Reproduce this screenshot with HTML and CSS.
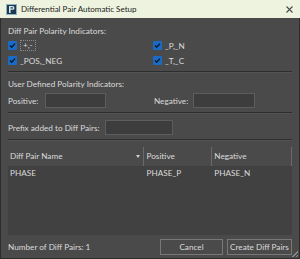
FILE: index.html
```html
<!DOCTYPE html>
<html lang="en">
<head>
  <meta charset="UTF-8" />
  <title>Differential Pair Automatic Setup</title>
  <link rel="stylesheet" href="styles.css">
</head>
<body>
  <div class="dialog">
    <div class="titlebar">
      <svg class="app-icon" width="11" height="11" viewBox="0 0 11 11">
        <rect x="0.5" y="0.5" width="10" height="10" fill="#1d3b50" stroke="#8fb2c4"/>
        <path d="M3 2h3.6a1.9 1.9 0 0 1 0 3.8H4.6V9H3z M4.6 3.3v1.3h1.9a0.65 0.65 0 0 0 0-1.3z" fill="#d6e6ee" fill-rule="evenodd"/>
      </svg>
      <span class="title">Differential Pair Automatic Setup</span>
      <svg class="close" width="7" height="7" viewBox="0 0 7 7">
        <path d="M0.5 0.5L6.5 6.5M6.5 0.5L0.5 6.5" stroke="#4a4a4a" stroke-width="1.1"/>
      </svg>
    </div>

    <div class="content">
      <div class="label">Diff Pair Polarity Indicators:</div>
      <div class="checks">
        <label class="check">
          <svg class="box" width="9" height="9" viewBox="0 0 9 9"><rect width="9" height="9" rx="1" fill="#1a6bc6"/><path d="M2 4.6L3.7 6.3L7 2.6" fill="none" stroke="#0c1724" stroke-width="1.4"/></svg>
          <span class="focus">+,-</span>
        </label>
        <label class="check">
          <svg class="box" width="9" height="9" viewBox="0 0 9 9"><rect width="9" height="9" rx="1" fill="#1a6bc6"/><path d="M2 4.6L3.7 6.3L7 2.6" fill="none" stroke="#0c1724" stroke-width="1.4"/></svg>
          <span>_P,_N</span>
        </label>
        <label class="check">
          <svg class="box" width="9" height="9" viewBox="0 0 9 9"><rect width="9" height="9" rx="1" fill="#1a6bc6"/><path d="M2 4.6L3.7 6.3L7 2.6" fill="none" stroke="#0c1724" stroke-width="1.4"/></svg>
          <span>_POS,_NEG</span>
        </label>
        <label class="check">
          <svg class="box" width="9" height="9" viewBox="0 0 9 9"><rect width="9" height="9" rx="1" fill="#1a6bc6"/><path d="M2 4.6L3.7 6.3L7 2.6" fill="none" stroke="#0c1724" stroke-width="1.4"/></svg>
          <span>_T,_C</span>
        </label>
      </div>
      <div class="sep"></div>

      <div class="label">User Defined Polarity Indicators:</div>
      <div class="row pol-row">
        <span class="lbl-pos">Positive:</span><span class="field f-pos"></span>
        <span class="lbl-neg">Negative:</span><span class="field f-neg"></span>
      </div>
      <div class="sep"></div>

      <div class="row prefix-row">
        <span class="lbl-prefix">Prefix added to Diff Pairs:</span><span class="field f-prefix"></span>
      </div>
      <div class="sep"></div>

      <div class="table">
        <div class="thead">
          <div class="th c1">Diff Pair Name<span class="sort"></span></div>
          <div class="th c2">Positive</div>
          <div class="th c3">Negative</div>
        </div>
        <div class="tbody">
          <div class="tr">
            <div class="td c1">PHASE</div>
            <div class="td c2">PHASE_P</div>
            <div class="td c3">PHASE_N</div>
          </div>
        </div>
      </div>

      <div class="footer">
        <span class="count">Number of Diff Pairs: 1</span>
        <button class="btn cancel">Cancel</button>
        <button class="btn create">Create Diff Pairs</button>
      </div>
    </div>
    <div class="grip"></div>
  </div>
</body>
</html>
```

FILE: styles.css
```css
* {
  box-sizing: border-box;
}
body {
  margin: 0;
  background: #2b2b2b;
  font-family: 'Lato', 'Liberation Sans', sans-serif;
  font-size: 8.2px;
  color: #dadada;
}
.dialog {
  position: relative;
  width: 300px;
  height: 259px;
  border: 1px solid #2c2c2c;
  border-top: none;
  background: #4a4a4a;
  display: flex;
  flex-direction: column;
}
.titlebar {
  height: 21px;
  margin: 0 -1px;
  background: #edf3de;
  display: flex;
  align-items: center;
  padding-left: 6px;
  color: #1b1b1b;
  font-size: 8px;
}
.app-icon {
  margin-right: 4px;
}
.title {
  flex: 1;
}
.close {
  margin-right: 7px;
}
.content {
  flex: 1;
  padding: 6px 7px 0 7px;
  display: flex;
  flex-direction: column;
}
.label {
  height: 14px;
  line-height: 14px;
}
.checks {
  display: grid;
  grid-template-columns: 145px 1fr;
}
.check {
  display: flex;
  align-items: center;
  height: 15px;
  gap: 3px;
}
.focus {
  border: 1px dotted #8c8c8c;
  padding: 0 2px;
  line-height: 9px;
}
.sep {
  height: 2px;
  background: #2d2d2d;
  border-bottom: 1px solid #535353;
  margin: 3px 0 4px 0;
}
.row {
  display: flex;
  align-items: center;
  height: 17px;
}
.pol-row {
  margin-top: 1px;
}
.prefix-row {
  margin-top: 1px;
}
.field {
  background: #3d3d3d;
  border: 1px solid #5d5d5d;
}
.lbl-pos { width: 37px; }
.f-pos { width: 61px; height: 15px; }
.lbl-neg { width: 39px; margin-left: 48px; }
.f-neg { width: 62px; height: 15px; }
.lbl-prefix { width: 97px; }
.f-prefix { width: 68px; height: 15px; }
.table {
  height: 88px;
  display: flex;
  flex-direction: column;
  margin-top: 2px;
}
.thead {
  display: flex;
  height: 19px;
  line-height: 19px;
}
.th {
  border-right: 1px solid #6a6a6a;
}
.thead .c1 {
  position: relative;
  padding-left: 2px;
}
.sort {
  position: absolute;
  right: 3px;
  top: 8px;
  border-left: 2.5px solid transparent;
  border-right: 2.5px solid transparent;
  border-top: 3px solid #d0d0d0;
}
.c1 { width: 136px; }
.c2 { width: 69px; padding-left: 3px; }
.c3 { width: 80px; padding-left: 2px; }
.tbody {
  flex: 1;
  background: #414141;
}
.tr {
  display: flex;
  height: 14px;
  line-height: 14px;
}
.tbody .c1 {
  padding-left: 2px;
}
.footer {
  display: flex;
  align-items: center;
  height: 23px;
}
.count {
  flex: 1;
}
.btn {
  height: 16px;
  background: #4a4a4a;
  border: 1px solid #787878;
  color: #dadada;
  font-family: inherit;
  font-size: 8.2px;
  padding: 0;
}
.cancel { width: 63px; margin-right: 4px; }
.create { width: 65px; }
.grip {
  position: absolute;
  right: 1px;
  bottom: 1px;
  width: 6px;
  height: 6px;
  background: linear-gradient(135deg, transparent 50%, #8a8a8a 50%, #8a8a8a 62%, transparent 62%, transparent 76%, #8a8a8a 76%, #8a8a8a 88%, transparent 88%);
}
```
